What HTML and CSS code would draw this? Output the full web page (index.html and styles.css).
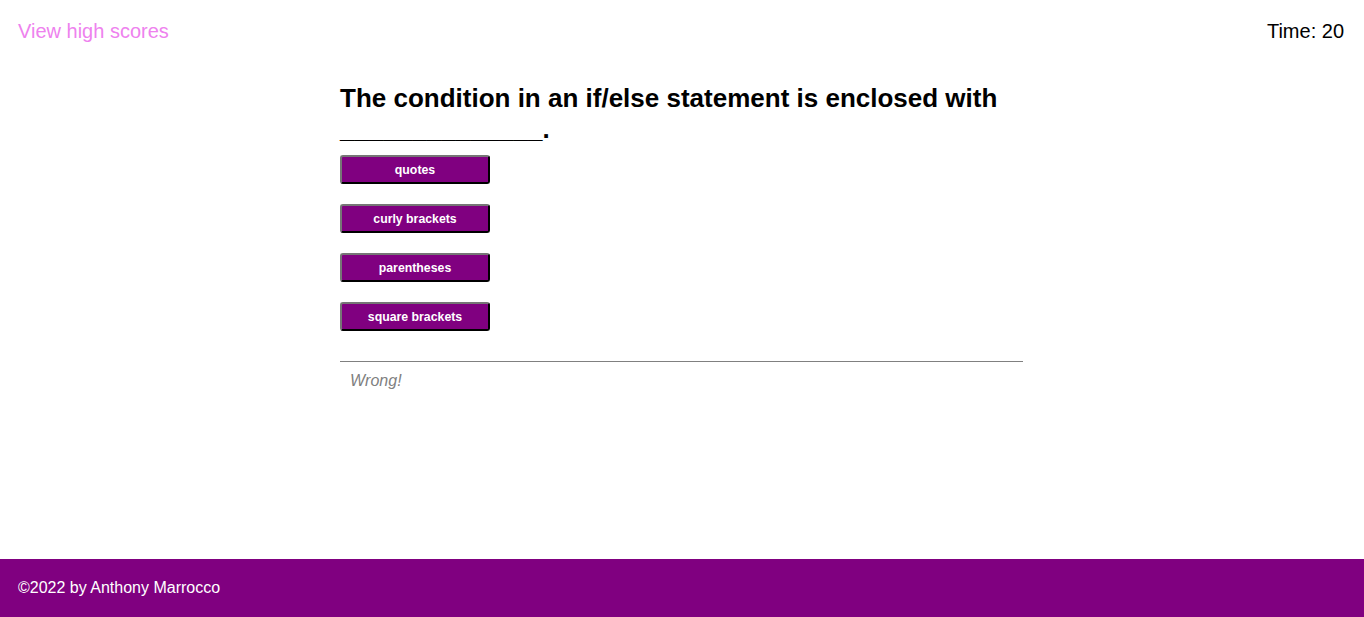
FILE: index.html
```html
<!DOCTYPE html>
<html>
<head>
<meta charset="utf-8">
<link rel="stylesheet" href="styles.css">
</head>
<body>
<div class="page">
  <header class="top">
    <a class="scores" href="#">View high scores</a>
    <div class="timer">Time: 20</div>
  </header>
  <main class="quiz">
    <h2 class="question">The condition in an if/else statement is enclosed with ______________.</h2>
    <div class="choices">
      <button class="choice">quotes</button>
      <button class="choice">curly brackets</button>
      <button class="choice">parentheses</button>
      <button class="choice">square brackets</button>
    </div>
    <div class="feedback">Wrong!</div>
  </main>
  <footer class="foot">©2022 by Anthony Marrocco</footer>
</div>
</body>
</html>
```
FILE: styles.css
```css
html, body {
  margin: 0;
  padding: 0;
  height: 100%;
}
body {
  font-family: "Liberation Sans", Arial, sans-serif;
  background: #fff;
  color: #000;
}
.page {
  min-height: 100%;
  display: flex;
  flex-direction: column;
}
.top {
  display: flex;
  justify-content: space-between;
  align-items: center;
  padding: 19px 20px 0 18px;
  font-size: 20px;
  height: 24px;
}
.scores {
  color: #ee82ee;
  text-decoration: none;
}
.timer {
  color: #000;
}
.quiz {
  width: 50%;
  margin: 0 auto;
  padding-top: 40px;
  flex: 1;
}
.question {
  font-size: 26px;
  font-weight: bold;
  margin: 0 0 0 -1px;
  line-height: 31px;
}
.choices {
  display: flex;
  flex-direction: column;
  align-items: flex-start;
  gap: 20px;
  margin-top: 10px;
  margin-left: -1px;
}
.choice {
  width: 150px;
  height: 29px;
  background: #800080;
  color: #fff;
  font-family: "Liberation Sans", Arial, sans-serif;
  font-weight: bold;
  font-size: 12.3px;
  border: 2px outset #767676;
  border-right-color: #222;
  border-bottom-color: #222;
  border-radius: 3px;
  padding: 0;
}
.feedback {
  margin-top: 30px;
  margin-left: -1px;
  border-top: 1px solid #808080;
  padding: 10px 10px;
  font-style: italic;
  color: #808080;
  font-size: 16px;
}
.foot {
  background: #800080;
  color: #fff;
  height: 58px;
  display: flex;
  align-items: center;
  padding-left: 18px;
  font-size: 16px;
}
```
